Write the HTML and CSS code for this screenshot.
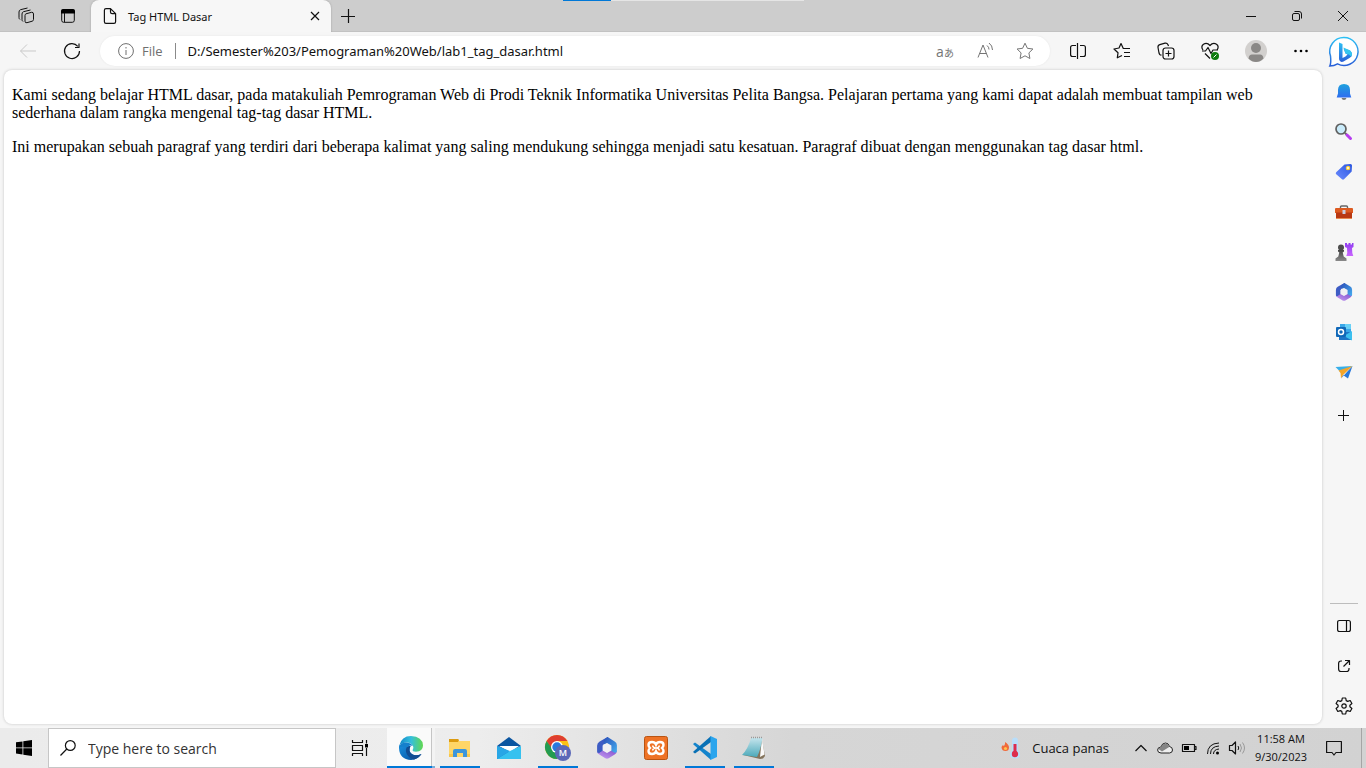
FILE: index.html
```html
<!DOCTYPE html>
<html lang="id">
<head>
<meta charset="utf-8">
<title>Tag HTML Dasar</title>
<link rel="stylesheet" href="styles.css">
</head>
<body>
<svg class="defs" aria-hidden="true">
  <defs>
    <linearGradient id="gBing" x1="0" y1="0" x2="0" y2="1"><stop offset="0" stop-color="#2cc0f4"/><stop offset="1" stop-color="#2a5fd8"/></linearGradient>
    <linearGradient id="gBell" x1="0" y1="0" x2="0" y2="1"><stop offset="0" stop-color="#1ea2dd"/><stop offset="1" stop-color="#2f6df0"/></linearGradient>
    <linearGradient id="gTag" x1="1" y1="0" x2="0" y2="1"><stop offset="0" stop-color="#2a56e0"/><stop offset="1" stop-color="#6d8cff"/></linearGradient>
    <linearGradient id="gBlue" x1="0" y1="0" x2="1" y2="1"><stop offset="0" stop-color="#2b4fb8"/><stop offset="1" stop-color="#45aef0"/></linearGradient>
    <linearGradient id="gPurple" x1="0" y1="1" x2="1" y2="0"><stop offset="0" stop-color="#c9a0f4"/><stop offset="1" stop-color="#8250cc"/></linearGradient>
    <linearGradient id="gRook" x1="0" y1="0" x2="0" y2="1"><stop offset="0" stop-color="#8f3cf0"/><stop offset="1" stop-color="#c965ff"/></linearGradient>
    <linearGradient id="gPawn" x1="0" y1="0" x2="0" y2="1"><stop offset="0" stop-color="#444"/><stop offset="1" stop-color="#8a8a8a"/></linearGradient>
    <linearGradient id="gEdgeTop" x1="0" y1="0" x2="1" y2="0"><stop offset="0" stop-color="#1287c9"/><stop offset=".5" stop-color="#35bfdc"/><stop offset="1" stop-color="#62d84e"/></linearGradient>
    <linearGradient id="gEdgeLow" x1="0" y1="0" x2="1" y2="1"><stop offset="0" stop-color="#1a8fdc"/><stop offset=".6" stop-color="#0d68b8"/><stop offset="1" stop-color="#0b4488"/></linearGradient>
    <linearGradient id="gNote" x1="0" y1="0" x2="0" y2="1"><stop offset="0" stop-color="#c4e4ec"/><stop offset="1" stop-color="#4ba9ba"/></linearGradient>
    <symbol id="m365" viewBox="0 0 20 20">
      <path fill="#3d5cc4" d="M10.500 0 3 4.300Q1 5.500 1 8v5.500q0 1.800 2 1.500l3.500-2V8Q6.500 6.500 8 5.500L13 3Z"/>
      <path fill="url(#gPurple)" d="M1 13.500Q1.400 15 3 16l5.500 3.400q1.500.9 3 0L17 16q1.600-1 2-3l-5.500-1L10 14l-3.500-2L3 14.500Q1.500 14.800 1 13.500Z"/>
      <path fill="url(#gBlue)" d="M10.500 0 17 4q2 1.200 2 3.500V13q-.5 2-2.500 1L12 11.500l1.500-3.500L10 6 7 6.500V2.500Z"/>
      <path fill="#f0f0f3" d="m10 5.500 4 2.300v4.400L10 14.500l-4-2.300V7.800Z"/>
    </symbol>
  </defs>
</svg>

<header class="titlebar">
  <div class="load" aria-hidden="true"></div>
  <button class="tool" aria-label="Workspaces"><svg class="i18" viewBox="0 0 18 18"><path class="ln" d="M9 6.800 14.500 5.300Q16.500 5 16.500 7v5.500q0 1.300-1.300 1.700L10 15.700Q8 16.200 8 14.200V8.500Q8 7.200 9 6.800ZM6 14.500Q5 14 5 12.500V7q0-1.800 1.500-2.300L13.500 3M3 12.500Q2 12 2 10.500V5q0-1.800 1.500-2.300L10.500 1"/></svg></button>
  <button class="tool" aria-label="Tab actions"><svg class="i16" viewBox="0 0 16 16"><rect x="1.700" y="1.700" width="12.600" height="12.600" rx="2" class="ln"/><path d="M1 4V3q0-2 2-2h10q2 0 2 2v2.500H1Z"/><path class="ln" d="M4.500 5v9"/></svg></button>
  <div class="tab">
    <svg class="i16" viewBox="0 0 16 16"><path class="ln hv" d="M8.500.6H4Q2.400.6 2.400 2.200v11.600q0 1.600 1.600 1.600h8q1.600 0 1.600-1.600V5.700ZM8.500.6v3.500q0 1.600 1.600 1.600h3.500"/></svg>
    <span class="tab-name">Tag HTML Dasar</span>
    <button class="close" aria-label="Close tab"><svg class="i10" viewBox="0 0 10 10"><path class="ln hv" d="m1 1 8 8M9 1 1 9"/></svg></button>
  </div>
  <button class="new" aria-label="New tab"><svg class="i14" viewBox="0 0 14 14"><path class="ln hv" d="M7.500 0v14M0 7.500h14"/></svg></button>
  <div class="controls">
    <button aria-label="Minimize"><svg class="i10" viewBox="0 0 10 10"><path class="ln" d="M0 5.500h10"/></svg></button>
    <button aria-label="Restore"><svg class="i10" viewBox="0 0 10 10"><rect class="ln" x=".5" y="2.500" width="7" height="7" rx="1.500"/><path class="ln" d="M2.500.5H7q2.500 0 2.500 2.500v4.500"/></svg></button>
    <button aria-label="Close"><svg class="i10" viewBox="0 0 10 10"><path class="ln" d="m0 0 10 10M10 0 0 10"/></svg></button>
  </div>
</header>

<div class="window">
  <div class="view">
    <nav class="toolbar">
      <button class="act dim" aria-label="Back"><svg class="i16" viewBox="0 0 16 16"><path class="ln" d="M16 8H.5M7 1.500.5 8 7 14.500"/></svg></button>
      <button class="act" aria-label="Refresh"><svg class="i18" viewBox="0 0 18 18"><path class="ln hv" d="M16.500 9A7.500 7.500 0 1 1 14.800 4.300M16 1.500V5.500H12"/></svg></button>
      <div class="address">
        <button class="site"><svg class="i16" viewBox="0 0 16 16"><circle class="ln" cx="8" cy="8" r="7.400"/><path class="ln" d="M8 7v5M8 4v1.500"/></svg>File</button>
        <input class="url" type="text" aria-label="Address" value="D:/Semester%203/Pemograman%20Web/lab1_tag_dasar.html">
        <button class="mini lang" aria-label="Translate"><span>a<span class="kana">あ</span></span></button>
        <button class="mini" aria-label="Read aloud"><svg class="i18" viewBox="0 0 18 18"><path class="ln" d="m2 15.500 5-12.500 5 12.500M3.500 11.500h7M11 3.500q2 1.500 2 4M13 1q3.500 2.500 3.500 7"/></svg></button>
        <button class="mini" aria-label="Add to favorites"><svg class="i18" viewBox="0 0 18 18"><path class="ln" d="m9 1.200 2.400 5.100 5.500.7-4 3.900 1 5.600L9 13.800l-4.900 2.700 1-5.600-4-3.900 5.500-.7Z"/></svg></button>
      </div>
      <button class="act" aria-label="Split screen"><svg class="i16" viewBox="0 0 16 16"><path class="ln hv" d="M6 2.500H2.500Q.6 2.500.6 4.500v7q0 2 1.900 2H6M10 2.500h3.500q1.900 0 1.900 2v7q0 2-1.900 2H10M7.500 0v16"/></svg></button>
      <button class="act" aria-label="Favorites"><svg class="i18" viewBox="0 0 18 18"><path class="ln hv" d="M9 13.500 4.300 15.800 5 10.800 1 7 6 6 8 1.500 10.300 6.500H17M11 10.500H17M11 14.500H17"/></svg></button>
      <button class="act" aria-label="Collections"><svg class="i18" viewBox="0 0 18 18"><g class="ln hv"><rect x="6" y="6" width="11" height="11" rx="2.500"/><path d="M11.500 8.500v6M8.500 11.500h6M4.500 13.200 3.300 13Q2.500 12.700 2 11L1 5.500Q.7 3.300 2.800 2.700L8 1.200q2-.5 3 1.500l.5 1.200"/></g></svg></button>
      <button class="act" aria-label="Browser essentials"><svg class="i18" viewBox="0 0 18 18"><path class="ln hv" d="M2 8Q-.5 4.500 2.500 2.300 6 .2 9 3.500 12 .2 15.500 2.300 18.500 4.500 16 8M1 9h3.500L7 5.500l3 6 2-3.500h5M4 11.500 9 16.500"/><circle cx="14" cy="14" r="4" fill="#107c10"/><path d="m12.500 15.500 3-3" stroke="#fff"/></svg></button>
      <button class="act profile" aria-label="Profile"><svg class="i22" viewBox="0 0 22 22"><circle cx="11" cy="11" r="11" fill="#d2d0ce"/><circle cx="11" cy="8" r="5" fill="#8a8886"/><path d="M3.500 18.500Q4 14.500 7 14.500h8q3 0 3.500 4Q15 22 11 22t-7.500-3.500Z" fill="#8a8886"/></svg></button>
      <button class="act more" aria-label="Settings and more"><svg class="i14" viewBox="0 0 14 14"><circle cx="1.500" cy="7" r="1.300"/><circle cx="7" cy="7" r="1.300"/><circle cx="12.500" cy="7" r="1.300"/></svg></button>
    </nav>
    <main class="page">
      <p>Kami sedang belajar HTML dasar, pada matakuliah Pemrograman Web di Prodi Teknik Informatika Universitas Pelita Bangsa. Pelajaran pertama yang kami dapat adalah membuat tampilan web sederhana dalam rangka mengenal tag-tag dasar HTML.</p>
      <p>Ini merupakan sebuah paragraf yang terdiri dari beberapa kalimat yang saling mendukung sehingga menjadi satu kesatuan. Paragraf dibuat dengan menggunakan tag dasar html.</p>
    </main>
  </div>
  <aside class="sidebar">
    <button aria-label="Bing chat"><svg class="i32" viewBox="0 0 32 32"><path d="M16 1.500a14 14 0 1 1-6.500 26.400Q6 30 1.800 30 3.300 27 2.500 20A14 14 0 0 1 16 1.500Z" fill="#fff" stroke="url(#gBing)" stroke-width="1.500"/><path d="m11 6.500 3.500 1.500v14l3-1.500 2-2-2-1-2-5L21 14q3 1.500 3 4.500 0 2-2.500 3.500l-6 3.500q-2 1-3.500-.5-1-1-1-2.500Z" fill="url(#gBing)"/><path d="m15.500 11.500 5.500 2.500q3 1.500 3 4.500 0 1-.8 2-1.700-2.500-5.700-3Z" fill="#35c6ee"/></svg></button>
    <button aria-label="Notifications"><svg class="i18" viewBox="0 0 18 18"><path d="M6.500 15h5q-.5 2-2.500 2t-2.500-2Z" fill="#777"/><path d="M9 1q6 0 6 6v3.500l1.300 4H1.700L3 10.500V7Q3 1 9 1Z" fill="url(#gBell)"/></svg></button>
    <button aria-label="Search"><svg class="i18" viewBox="0 0 18 18"><path d="m10 10 2 2" stroke="#666" stroke-width="2"/><path d="m12 12 3.500 3.500" stroke="#b73df0" stroke-width="3" stroke-linecap="round"/><circle cx="6" cy="6" r="5" fill="#c9ebfa" stroke="#606060" stroke-width="1.700"/></svg></button>
    <button aria-label="Shopping"><svg class="i18" viewBox="0 0 18 18"><path d="M9.500 1.500 15.500 1Q17 1 17 2.500l-.3 6L9 16.300q-1 .9-2 0L1.200 11.200q-1-1 0-2Z" fill="url(#gTag)"/><circle cx="13" cy="5" r="1.600" fill="#fff" stroke="#ffd13b" stroke-width="1.300"/></svg></button>
    <button aria-label="Tools"><svg class="i18" viewBox="0 0 18 18"><path d="M5.500 6V4q0-1 1-1h5q1 0 1 1v2" fill="none" stroke="#666" stroke-width="1.400"/><path d="M1 5h16q1 0 1 1v4H0V6q0-1 1-1Z" fill="#dd5b21"/><path d="M1 9.500h16v6H1Z" fill="#b93812"/><path d="M1 15h16v1H1Z" fill="#e78b51"/><path d="M7.500 7h3v4h-3Z" fill="#ccd"/></svg></button>
    <button aria-label="Games"><svg class="i18" viewBox="0 0 18 18"><path d="M10 0h2v1.500h1.500V0h2v1.500H17V0h1.500v4l-1.500 1 .3 5 1 3h-7l1-3-.3-5L10 4Z" fill="url(#gRook)"/><circle cx="6" cy="4.500" r="3" fill="#4c4c4c"/><path d="M3 7h6v1.500L7.700 9.500l1 4L11.500 15.500V18H.5v-2.500l2.800-2 1-4L3 8.500Z" fill="url(#gPawn)"/></svg></button>
    <button aria-label="Microsoft 365"><svg class="i18"><use href="#m365"/></svg></button>
    <button aria-label="Outlook"><svg class="i18" viewBox="0 0 18 18"><path d="M5 1h11v10H5Z" fill="#39a7e8"/><path d="M10 1h6v5h-6Z" fill="#69d1f6"/><path d="M4 9h13v8H4Z" fill="#1c75c7"/><path d="m17 8-8 5 8 4.500Z" fill="#3cc0ef"/><rect x="1" y="4" width="10" height="10" rx="1" fill="#1068b8"/><circle cx="6" cy="9" r="2.500" fill="none" stroke="#fff" stroke-width="1.500"/></svg></button>
    <button aria-label="Drop"><svg class="i18" viewBox="0 0 18 18"><path d="M.5 4 17.500 3 6 9.500Z" fill="#37afe9"/><path d="M17.500 3 13 15.500 8 12l-2 3.500Z" fill="#2578dc"/><path d="m3.500 7.500 14-4.500L8 12l-2 3.500L5.500 10Z" fill="#f3a52b"/></svg></button>
    <button class="add" aria-label="Customize"><svg class="i12" viewBox="0 0 12 12"><path class="ln" d="M5.500 0v11M0 5.500h11"/></svg></button>
    <hr>
    <button aria-label="Hide sidebar"><svg class="i14" viewBox="0 0 14 14"><path class="ln hv" d="M2.500 1.500h9Q13.400 1.500 13.400 3.500v7q0 2-1.900 2h-9Q.6 12.500.6 10.500v-7q0-2 1.900-2ZM9.500 1.500v11"/></svg></button>
    <button aria-label="Open in new window"><svg class="i14" viewBox="0 0 14 14"><path class="ln hv" d="M5 2H4Q1.600 2 1.600 4.500v5.500Q1.600 12.500 4 12.500h5.500q2.500 0 2.500-2.500V9M8 1.500h4.500V6M12.500 1.500 6.500 7.500"/></svg></button>
    <button aria-label="Sidebar settings"><svg class="i18" viewBox="0 0 18 18"><path class="ln hv" d="M7.300 1h3.400l.5 2.600 1.500.8 2.500-.9 1.700 3-2 1.700v1.600l2 1.700-1.700 3-2.500-.9-1.500.8-.5 2.600H7.300l-.5-2.600-1.500-.8-2.500.9-1.700-3 2-1.700V8.200l-2-1.700 1.700-3 2.500.9 1.500-.8Z"/><circle class="ln hv" cx="9" cy="9" r="2.200"/></svg></button>
  </aside>
</div>

<footer class="taskbar">
  <button class="start" aria-label="Start"><svg class="i16" viewBox="0 0 16 16"><path d="m0 2.300 6.500-.9v6.100H0ZM7.300 1.300 16 0v7.500H7.300ZM0 8.300h6.500v6.200L0 13.600ZM7.300 8.300H16V16l-8.700-1.300Z"/></svg></button>
  <label class="search"><svg class="i16" viewBox="0 0 16 16"><circle class="ln hv" cx="10.300" cy="5.500" r="4.900"/><path class="ln hv" d="M6.800 9 .5 15.500"/></svg><input type="text" placeholder="Type here to search" aria-label="Type here to search"></label>
  <button class="start" aria-label="Task view"><svg class="i16" viewBox="0 0 16 16"><path class="ln hv" d="M.5 0v2.500h10V0M.5 16v-2.500h10V16M.5 5.500h10v5H.5ZM14.500 0v3.500M14.500 8v8"/><path d="M13 4h3v3.500h-3Z"/></svg></button>
  <div class="apps">
    <button class="app open active" aria-label="Microsoft Edge"><svg class="i24" viewBox="0 0 24 24"><path d="M.5 9Q0 10.500 0 12q.5 11.500 12 12 7-.5 10.500-6Q17 20.500 13 18q-4-3-1.500-8Z" fill="url(#gEdgeLow)"/><path d="M8.500 10q-3 4-.5 8.500 2.500 4 7 5 5-1.500 7.500-5.500-6 2.500-9.500.3-4-3-1.500-8.300Z" fill="#124d92"/><path d="M.3 9.500Q2.500 0 12 0q11.500.5 12 9.500-.2 6-7 6.300-4-.2-3.300-2 1.300-1.500.3-3.800Q12 6.800 8 6.500 3 6.500.3 9.500Z" fill="url(#gEdgeTop)"/><path d="M0 12Q.5 6.500 7 6.500q5 .2 6.800 3.500-3-1.200-4.800 1Q2 10 0 12Z" fill="#1580cc"/></svg></button>
    <button class="app open" aria-label="File Explorer"><svg class="i22" viewBox="0 0 22 22"><path d="M0 2h9l1 2h11v16H0Z" fill="#ffd667"/><path d="M0 2h9l1 1-1 2H0Z" fill="#dc9b10"/><path d="M4 20v-6q0-2 2-2h10q2 0 2 2v6h-4v-4H8v4Z" fill="#3c96db"/><path d="M0 17h4v3H0ZM18 17h3v3h-3Z" fill="#f7c64b"/></svg></button>
    <button class="app" aria-label="Mail"><svg class="i24" viewBox="0 0 24 24"><path d="M0 10 12 1l12 9-12 6Z" fill="#0a55a0"/><path d="M2 10h20l-9 6Z" fill="#fff"/><path d="M0 10v13h24Z" fill="#1684d3"/><path d="M24 10v13H0L13 15Z" fill="#36c1ef"/><path d="M0 10 13 15 0 23Z" fill="#28a6e6"/></svg></button>
    <button class="app open" aria-label="Google Chrome"><svg class="i26" viewBox="0 0 26 26"><circle cx="12" cy="12" r="12" fill="#fbc116"/><path d="M1.600 6A12 12 0 0 1 22.400 6H12l-5 9Z" fill="#df3e30"/><path d="M1.600 6A12 12 0 0 0 12 24l5-9-9 0Z" fill="#239b52"/><circle cx="12" cy="12" r="6" fill="#fff"/><circle cx="12" cy="12" r="4.700" fill="#2979df"/><circle cx="18" cy="18" r="8" fill="#5b68b8"/><text x="18" y="21" class="initial">M</text></svg></button>
    <button class="app" aria-label="Microsoft 365"><svg class="i22"><use href="#m365"/></svg></button>
    <button class="app" aria-label="XAMPP"><svg class="i24" viewBox="0 0 24 24"><rect x=".5" y=".5" width="23" height="23" rx="2" fill="#ee7225" stroke="#b95412"/><path d="M8 6q3 0 4 2.500Q13 6 16 6q3.500 0 3.500 3 0 1.500-1.500 3 1.500 1.500 1.500 3 0 3-3.500 3-3 0-4-2.500Q11 18 8 18q-3.500 0-3.500-3 0-1.500 1.500-3-1.500-1.500-1.500-3Q4.500 6 8 6Z" fill="none" stroke="#fff" stroke-width="2.400"/><path d="M8.500 9.500Q9 12 12 12t3.500-2.500M8.500 14.500Q9 12 12 12t3.500 2.500" fill="none" stroke="#fff" stroke-width="1.400"/></svg></button>
    <button class="app open" aria-label="Visual Studio Code"><svg class="i24" viewBox="0 0 24 24"><path d="M0 8 2 6.500 18 18v6L1 9Z" fill="#1484cc"/><path d="m0 16 2 1.500L18 6V0L1 15Z" fill="#0870b5"/><path d="m17.500 0 6.500 3v18l-6.500 3Z" fill="#2ba5ed"/></svg></button>
    <button class="app open" aria-label="Notepad"><svg class="i24" viewBox="0 0 24 24"><path d="m1 19 17 4 3-.5L23 20 20 4Z" fill="#84745c"/><path d="m20 2 2.500 16.500L18 21Z" fill="#fafafa"/><path d="M9 2h11.500Q19 13 15 21L0 19Q6 13 9 2Z" fill="url(#gNote)"/><path d="M9 1.500h12" stroke="#999" stroke-dasharray="1 1" stroke-width="1.500"/></svg></button>
  </div>
  <div class="tray">
    <button class="weather"><svg class="i22" viewBox="0 0 22 22"><path d="M4 5q4 2.500 4 5.500Q8 14 4.500 14T.5 10.500Q.5 9 2 8q.5 1 1 1 1.500-1.500 1-4Z" fill="#f06a3a"/><circle cx="4.500" cy="11.500" r="1.600" fill="#ffc44d"/><path d="M11 3.500q0-3 3-3t3 3v10q2 1.500 2 4 0 4-5 4t-5-4q0-2.500 2-4Z" fill="#b9defa"/><path d="M14 7v10" stroke="#dc2d4e" stroke-width="3"/><circle cx="14" cy="17" r="3.200" fill="#dc2d4e"/></svg>Cuaca panas</button>
    <button class="ic" aria-label="Show hidden icons"><svg class="i14" viewBox="0 0 14 14"><path class="ln hv" d="m1.500 10 5.500-5.500L12.500 10"/></svg></button>
    <button class="ic" aria-label="OneDrive"><svg class="i16" viewBox="0 0 16 16"><path d="M4 13Q.6 12.800.6 10T4 7Q5 3 8.500 3q3 0 4 3.500 3 .5 3 3.500 0 2.800-3 3Z" fill="#eee" stroke="#222"/><path d="M1.500 9Q2.500 7 4.500 6.500 5.500 3.500 8.500 3.500q3 0 3.700 3.500L5 11.500Z" fill="#858585"/></svg></button>
    <button class="ic" aria-label="Battery"><svg class="i16" viewBox="0 0 16 16"><path class="ln hv" d="M1.500 4.500h12v7h-12ZM13.500 6.500h1.500v3h-1.500"/><path d="M3 6h5v4H3Z"/></svg></button>
    <button class="ic" aria-label="Wi-Fi"><svg class="i14" viewBox="0 0 14 14"><path class="ln" d="M1.500 13Q1.500 2.500 13 2M4.500 13Q4.500 5.500 13 5M7.500 13Q7.500 8.500 13 8"/><circle cx="11.500" cy="12" r="1.500"/></svg></button>
    <button class="ic" aria-label="Volume"><svg class="i18" viewBox="0 0 18 18"><path class="ln hv" d="M1.500 6.500H4L7.500 3v12L4 11.500H1.500Z"/><path class="ln" d="M10 7q1.500 2 0 4"/><path d="M12 5q3 4 0 8M14.500 3.500q4 5.500 0 11" fill="none" stroke="#999"/></svg></button>
    <button class="clock"><span>11:58 AM</span><span>9/30/2023</span></button>
    <button class="note" aria-label="Action center"><svg class="i16" viewBox="0 0 16 16"><path class="ln hv" d="M.6 1.500h14.800v11H10L8 15l-2-2.500H.6Z"/></svg></button>
    <button class="desk" aria-label="Show desktop"></button>
  </div>
</footer>
</body>
</html>
```
FILE: styles.css
```css
* { box-sizing: border-box; }

body {
  margin: 0;
  height: 100vh;
  display: flex;
  flex-direction: column;
  overflow: hidden;
  background: #f6f6f6;
  color: #111;
  font-family: "Open Sans", "Noto Sans", sans-serif;
  font-size: 12px;
}

button, input {
  margin: 0;
  padding: 0;
  border: 0;
  background: none;
  color: inherit;
  font: inherit;
  outline: 0;
}

button {
  display: flex;
  align-items: center;
  justify-content: center;
  flex: none;
}

svg { flex: none; display: block; overflow: visible; }
.defs { position: absolute; width: 0; height: 0; }
.ln { fill: none; stroke: currentColor; stroke-width: 1; stroke-linejoin: round; }
.hv { stroke-width: 1.2; }
.i10 { width: 10px; height: 10px; }
.i12 { width: 12px; height: 12px; }
.i14 { width: 14px; height: 14px; }
.i16 { width: 16px; height: 16px; }
.i18 { width: 18px; height: 18px; }
.i22 { width: 22px; height: 22px; }
.i24 { width: 24px; height: 24px; }
.i26 { width: 26px; height: 26px; }
.i32 { width: 32px; height: 32px; }

/* Title bar */
.titlebar {
  position: relative;
  flex: none;
  display: flex;
  height: 32px;
  padding-left: 5px;
  background: #cdcdcd;
  box-shadow: inset 0 -1px #c2c2c2;
}
.load {
  position: absolute;
  top: 0;
  left: 50%;
  width: 241px;
  height: 1px;
  margin-left: -120px;
  background: linear-gradient(90deg, #0078d7 20%, #e5e5e5 20%);
}
.tool { width: 42px; }
.tab {
  display: flex;
  align-items: center;
  gap: 10px;
  width: 240px;
  margin-left: 2px;
  padding: 0 8px 0 11px;
  border-radius: 8px 8px 0 0;
  background: #f7f7f7;
  box-shadow: 0 0 2px #999;
  clip-path: inset(0 -3px);
}
.tab-name { flex: 1; font-family: "Noto Sans", sans-serif; font-size: 11px; }
.close { width: 16px; height: 16px; }
.new { width: 34px; }
.controls { display: flex; margin-left: auto; }
.controls button { width: 46px; }

/* Browser window */
.window { flex: 1; display: flex; min-height: 0; }
.view { flex: 1; display: flex; flex-direction: column; min-width: 0; }
.toolbar {
  display: flex;
  align-items: center;
  height: 38px;
  padding-left: 6px;
}
.act { width: 44px; height: 30px; }
.dim { color: #c9c9c9; }
.profile { width: 48px; }
.more { width: 42px; }
.address {
  flex: 1;
  display: flex;
  align-items: center;
  height: 30px;
  margin: 0 6px;
  padding: 0 5px 0 18px;
  border-radius: 15px;
  background: #fff;
  box-shadow: 0 0 2px #e4e4e4;
  font-size: 13px;
}
.site {
  gap: 8px;
  height: 16px;
  padding-right: 12px;
  border-right: 1px solid #8a8a8a;
  color: #6f6f6f;
}
.url { flex: 1; min-width: 0; padding-left: 12px; font-family: "Noto Sans", sans-serif; }
.mini { width: 40px; height: 30px; color: #757575; }
.lang { font-size: 14px; }
.kana { font-family: "Noto Sans CJK JP", sans-serif; font-size: 10px; }

.page {
  flex: 1;
  margin: 0 0 4px 4px;
  padding: 0 8px;
  border-radius: 8px;
  background: #fff;
  box-shadow: 0 0 3px #c4c4c4;
  color: #000;
  font: 16px/18px "Liberation Serif", serif;
}
.page p { margin: 16px 0; }

/* Sidebar */
.sidebar {
  flex: none;
  display: flex;
  flex-direction: column;
  width: 44px;
  padding-bottom: 2px;
}
.sidebar button { height: 40px; }
.sidebar .add { margin-top: 4px; }
.sidebar hr {
  width: 28px;
  height: 1px;
  margin: auto auto 2px;
  border: 0;
  background: #bdbdbd;
}

/* Taskbar */
.taskbar {
  flex: none;
  display: flex;
  height: 40px;
  background: linear-gradient(90deg, #ebebeb, #ededed 35%, #d6d6d6 58%, #d2d2d2);
}
.start { width: 48px; }
.search {
  display: flex;
  align-items: center;
  gap: 12px;
  width: 288px;
  padding: 0 11px;
  border: 1px solid #c6c6c6;
  background: #fff;
}
.search input { flex: 1; min-width: 0; font-size: 14px; }
.search input::placeholder { color: #333; opacity: 1; }
.apps { display: flex; gap: 1px; margin-left: 3px; }
.app { position: relative; width: 48px; }
.open::after {
  content: "";
  position: absolute;
  inset: auto 4px 0;
  height: 2px;
  background: #0078d7;
}
.active {
  background: linear-gradient(90deg, #fafafa 44px, #c5c5c5 44px, #c5c5c5 45px, #f3f3f3 45px);
}
.active::after { inset: auto 0 0; background: linear-gradient(90deg, #0078d7 45px, #76aedb 45px); }
.initial { fill: #fff; font-size: 9px; font-weight: 600; text-anchor: middle; }

.tray { display: flex; margin-left: auto; }
.weather { gap: 9px; margin-right: 20px; font-size: 13px; }
.ic { width: 24px; }
.clock {
  flex-direction: column;
  width: 64px;
  font-size: 11px;
  line-height: 18px;
}
.note { width: 42px; margin-right: 6px; }
.desk { width: 5px; border-left: 1px solid #a5a5a5; }
```
